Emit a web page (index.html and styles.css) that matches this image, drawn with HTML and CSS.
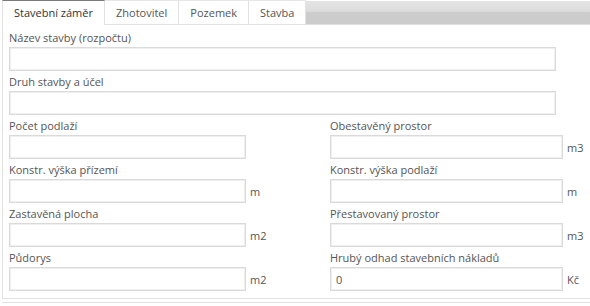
FILE: index.html
```html
<!DOCTYPE html>
<html lang="cs">
<head>
    <meta charset="UTF-8">
    <title>Stavební záměr</title>
    <link rel="stylesheet" href="styles.css">
</head>
<body>
    <div class="tabs">
        <ul class="tab-list">
            <li class="tab active">Stavební záměr</li>
            <li class="tab">Zhotovitel</li>
            <li class="tab">Pozemek</li>
            <li class="tab">Stavba</li>
        </ul>
        <div class="tab-fill"></div>
    </div>
    <div class="panel">
        <div class="field">
            <label>Název stavby (rozpočtu)</label>
            <input type="text" class="wide">
        </div>
        <div class="field">
            <label>Druh stavby a účel</label>
            <input type="text" class="wide">
        </div>
        <div class="cols">
            <div class="field">
                <label>Počet podlaží</label>
                <div class="row"><input type="text"></div>
            </div>
            <div class="field">
                <label>Obestavěný prostor</label>
                <div class="row"><input type="text"><span class="unit">m3</span></div>
            </div>
            <div class="field">
                <label>Konstr. výška přízemí</label>
                <div class="row"><input type="text"><span class="unit">m</span></div>
            </div>
            <div class="field">
                <label>Konstr. výška podlaží</label>
                <div class="row"><input type="text"><span class="unit">m</span></div>
            </div>
            <div class="field">
                <label>Zastavěná plocha</label>
                <div class="row"><input type="text"><span class="unit">m2</span></div>
            </div>
            <div class="field">
                <label>Přestavovaný prostor</label>
                <div class="row"><input type="text"><span class="unit">m3</span></div>
            </div>
            <div class="field">
                <label>Půdorys</label>
                <div class="row"><input type="text"><span class="unit">m2</span></div>
            </div>
            <div class="field">
                <label>Hrubý odhad stavebních nákladů</label>
                <div class="row"><input type="text" value="0"><span class="unit">Kč</span></div>
            </div>
        </div>
    </div>
    <div class="footer-line"></div>
</body>
</html>
```

FILE: styles.css
```css
* {
    margin: 0;
    padding: 0;
    box-sizing: border-box;
}
body {
    font-family: "Open Sans", "Liberation Sans", sans-serif;
    font-size: 11px;
    color: #555555;
    background: #ffffff;
    padding: 0 0 0 2px;
}
.tabs {
    display: flex;
    height: 25px;
}
.tab-list {
    list-style: none;
    display: flex;
}
.tab {
    height: 25px;
    line-height: 23px;
    padding: 0 11px;
    border: 1px solid #e2e2e2;
    border-left: none;
    border-top: 1px solid #e6e6e6;
    background: #ffffff;
    color: #555555;
    font-size: 11px;
}
.tab.active {
    border-top: 1px solid #7a7a7a;
    border-left: 1px solid #e2e2e2;
    border-bottom: none;
    color: #333333;
}
.tab-fill {
    flex: 1;
    margin-top: 1px;
    height: 24px;
    background: linear-gradient(#e4e4e4 0%, #dcdcdc 45%, #cccccc 50%, #cccccc 100%);
    border-bottom: 1px solid #e0e0e0;
}
.panel {
    border-left: 1px solid #e2e2e2;
    border-bottom: 1px solid #e2e2e2;
    padding: 4px 0 8px 6px;
    height: 274px;
}
.field {
    display: flex;
    flex-direction: column;
}
.field label {
    height: 18px;
    line-height: 18px;
    color: #555555;
}
input {
    height: 24px;
    border: 1px solid #dadada;
    box-shadow: inset 0 0 0 1px #efefef;
    background: #ffffff;
    font-family: "Open Sans", "Liberation Sans", sans-serif;
    font-size: 11px;
    color: #555555;
    padding: 0 5px;
    outline: none;
}
input.wide {
    width: 547px;
    margin-bottom: 2px;
}
.cols {
    display: grid;
    grid-template-columns: 321px 1fr;
}
.cols .field {
    margin-bottom: 2px;
}
.row {
    display: flex;
    align-items: center;
}
.cols .field:nth-child(odd) input {
    width: 237px;
}
.cols .field:nth-child(even) input {
    width: 233px;
}
.unit {
    margin-left: 4px;
    color: #555555;
}
.footer-line {
    margin-top: 3px;
    height: 1px;
    background: #e2e2e2;
}
```
